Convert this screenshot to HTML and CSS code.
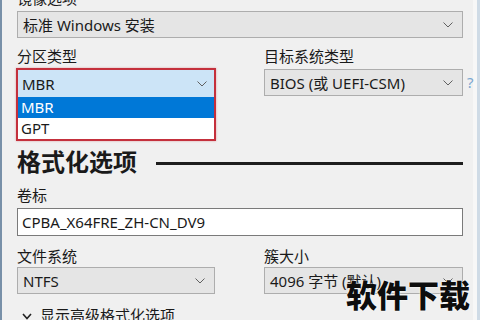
FILE: index.html
```html
<!DOCTYPE html>
<html lang="zh-CN">
<head>
<meta charset="utf-8">
<link rel="stylesheet" href="styles.css">
</head>
<body>
<div class="window">
  <div class="panel">
    <div class="label span">镜像选项</div>
    <div class="select span"><span>标准 Windows 安装</span><svg class="chev" width="10" height="6" viewBox="0 0 10 6"><polyline points="0.5,0.5 5,5 9.5,0.5" fill="none" stroke="#606060" stroke-width="1"/></svg></div>

    <div class="label top2">分区类型</div>
    <div class="label top2">目标系统类型</div>

    <div class="focusbox">
      <div class="select open"><span>MBR</span><svg class="chev" width="10" height="6" viewBox="0 0 10 6"><polyline points="0.5,0.5 5,5 9.5,0.5" fill="none" stroke="#606060" stroke-width="1"/></svg></div>
      <div class="option active">MBR</div>
      <div class="option">GPT</div>
    </div>
    <div class="withhelp">
      <div class="select"><span>BIOS (或 UEFI-CSM)</span><svg class="chev" width="10" height="6" viewBox="0 0 10 6"><polyline points="0.5,0.5 5,5 9.5,0.5" fill="none" stroke="#606060" stroke-width="1"/></svg></div>
      <span class="help">?</span>
    </div>

    <div class="heading span"><h2>格式化选项</h2><div class="rule"></div></div>

    <div class="label span">卷标</div>
    <div class="input span">CPBA_X64FRE_ZH-CN_DV9</div>

    <div class="label top3">文件系统</div>
    <div class="label top3">簇大小</div>
    <div class="select"><span>NTFS</span><svg class="chev" width="10" height="6" viewBox="0 0 10 6"><polyline points="0.5,0.5 5,5 9.5,0.5" fill="none" stroke="#606060" stroke-width="1"/></svg></div>
    <div class="select"><span>4096 字节 (默认)</span><svg class="chev" width="10" height="6" viewBox="0 0 10 6"><polyline points="0.5,0.5 5,5 9.5,0.5" fill="none" stroke="#606060" stroke-width="1"/></svg></div>

    <div class="advanced span"><svg class="adv-chev" width="10" height="7" viewBox="0 0 10 7"><polyline points="1,1 5,5.5 9,1" fill="none" stroke="#222" stroke-width="1.6"/></svg><span>显示高级格式化选项</span></div>
  </div>
  <div class="watermark">软件下载</div>
</div>
</body>
</html>
```

FILE: styles.css
```css
html, body {
  margin: 0;
  padding: 0;
}
body {
  width: 480px;
  height: 320px;
  overflow: hidden;
  background: #f0f0f0;
  font-family: "Segoe UI", "Noto Sans", "Noto Sans CJK SC", sans-serif;
  color: #1a1a1a;
}
.window {
  position: relative;
  width: 480px;
  height: 320px;
  box-sizing: border-box;
  border-left: 2px solid #7890a8;
  border-right: 3px solid #cfdbe6;
  box-shadow: inset -4px 0 0 #f7f7f7;
  overflow: hidden;
}
.panel {
  margin-top: -12px;
  padding-left: 15px;
  display: grid;
  grid-template-columns: 198px 199px;
  column-gap: 49px;
  align-items: start;
}
.span {
  grid-column: 1 / span 2;
}
.label {
  font-size: 15px;
  line-height: 20px;
  height: 20px;
  margin-bottom: 3px;
  color: #1a1a1a;
}
.top2 {
  margin-top: 8px;
}
.top3 {
  margin-top: 10px;
  margin-bottom: 1px;
}
.select {
  height: 27px;
  box-sizing: border-box;
  border: 1px solid #adadad;
  background: #e5e5e5;
  display: flex;
  align-items: center;
  justify-content: space-between;
  padding: 0 9px 0 5px;
  font-size: 15px;
  line-height: 20px;
}
.chev {
  display: block;
}
.focusbox {
  margin: -1px -1px 0 -1px;
  border: 2px solid #c4303c;
  box-shadow: 0 0 2px rgba(196, 48, 60, 0.4);
  background: #fff;
}
.select.open {
  border: none;
  background: #cce4f7;
  height: 27px;
  padding-left: 4px;
  padding-right: 7px;
}
.option {
  height: 21px;
  line-height: 21px;
  padding-left: 3px;
  font-size: 15px;
}
.option.active {
  background: #0078d7;
  color: #fff;
}
.withhelp {
  position: relative;
}
.help {
  position: absolute;
  left: 203px;
  top: 3px;
  font-size: 15px;
  line-height: 20px;
  color: #7aa7d0;
}
.heading {
  display: flex;
  align-items: center;
  margin-top: 4px;
  height: 32px;
}
.heading h2 {
  margin: 0;
  font-size: 24px;
  line-height: 32px;
  font-weight: 700;
  font-family: "Noto Sans CJK SC", sans-serif;
  color: #1a1a1a;
}
.rule {
  flex: 1;
  height: 3px;
  background: #1e1e1e;
  margin-left: 19px;
  margin-top: 5px;
}
.heading + .label {
  margin-top: 8px;
}
.input {
  height: 28px;
  box-sizing: border-box;
  border: 1px solid #7a7a7a;
  background: #fff;
  padding-left: 4px;
  font-size: 15px;
  line-height: 26px;
}
.advanced {
  margin-top: 11px;
  display: flex;
  align-items: center;
  font-size: 15px;
  line-height: 20px;
}
.adv-chev {
  margin: 2px 8px 0 5px;
}
.watermark {
  position: absolute;
  left: 344px;
  top: 274px;
  font-family: "Noto Sans CJK SC", sans-serif;
  font-weight: 900;
  font-size: 31px;
  line-height: 40px;
  color: #0d0d0d;
  letter-spacing: 0;
  text-shadow: 0 0 2px #fff, 0 0 1px #fff;
}
```
